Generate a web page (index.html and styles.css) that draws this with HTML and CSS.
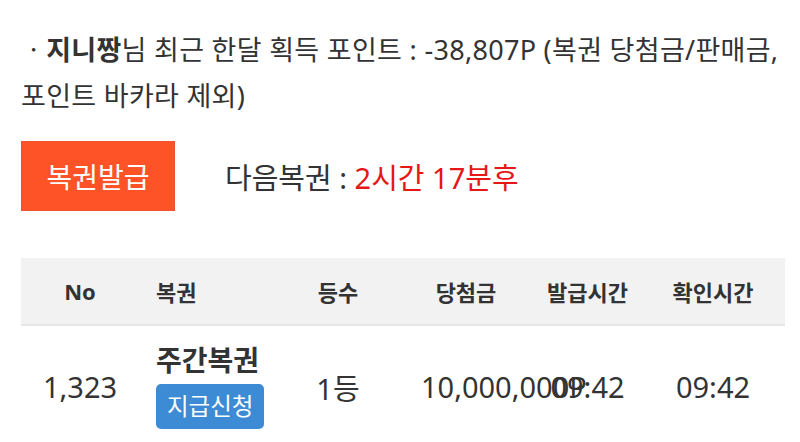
FILE: index.html
```html
<!DOCTYPE html>
<html lang="ko">
<head>
<meta charset="utf-8">
<link rel="stylesheet" href="styles.css">
</head>
<body>
<div class="wrap">
  <p class="info">ㆍ<b>지니짱</b>님 최근 한달 획득 포인트 : -38,807P (복권 당첨금/판매금, 포인트 바카라 제외)</p>
  <div class="issue">
    <button class="issue-btn">복권발급</button>
    <div class="next">다음복권 : <span class="red">2시간 17분후</span></div>
  </div>
  <table class="tbl">
    <colgroup>
      <col class="c1"><col class="c2"><col class="c3"><col class="c4"><col class="c5"><col class="c6">
    </colgroup>
    <thead>
      <tr>
        <th>No</th>
        <th class="left">복권</th>
        <th>등수</th>
        <th class="amt">당첨금</th>
        <th class="t1">발급시간</th>
        <th>확인시간</th>
      </tr>
    </thead>
    <tbody>
      <tr>
        <td>1,323</td>
        <td class="left">
          <div class="kind">주간복권</div>
          <span class="claim">지급신청</span>
        </td>
        <td>1등</td>
        <td class="amt">10,000,000P</td>
        <td class="t1">09:42</td>
        <td>09:42</td>
      </tr>
    </tbody>
  </table>
</div>
</body>
</html>
```

FILE: styles.css
```css
html, body {
  margin: 0;
  padding: 0;
  background: #ffffff;
}
body {
  font-family: "Noto Sans", "Noto Sans CJK KR", sans-serif;
  color: #333333;
  overflow: hidden;
}
.wrap {
  padding: 27px 10px 0 21px;
}
.info {
  margin: 0;
  font-size: 27px;
  line-height: 46px;
  letter-spacing: 0.3px;
  word-break: keep-all;
}
.info b {
  font-weight: 700;
}
.issue {
  margin-top: 22px;
  display: flex;
  align-items: center;
  gap: 50px;
}
.issue-btn {
  width: 154px;
  height: 70px;
  box-sizing: border-box;
  background: #fd5326;
  border: 1px solid #e9542e;
  color: #ffffff;
  font-family: inherit;
  font-size: 28px;
  padding: 0;
}
.next {
  font-size: 29px;
}
.red {
  color: #e51717;
}
.tbl {
  margin-top: 47px;
  width: 764px;
  border-collapse: collapse;
  table-layout: fixed;
}
.c1 { width: 118px; }
.c2 { width: 151px; }
.c3 { width: 96px; }
.c4 { width: 160px; }
.c5 { width: 95px; }
.c6 { width: 144px; }
.tbl th {
  background: #f2f2f2;
  height: 66px;
  padding: 0;
  font-size: 22px;
  font-weight: 700;
  color: #333333;
  text-align: center;
  border-bottom: 2px solid #e6e6e6;
}
.tbl td {
  padding: 18px 0;
  font-size: 29px;
  text-align: center;
  vertical-align: middle;
  white-space: nowrap;
  color: #333333;
}
.tbl .left {
  text-align: left;
  padding-left: 17px;
}
.tbl .amt {
  padding-left: 35px;
  padding-right: 35px;
}
.tbl .t1 {
  padding-right: 12px;
}
.kind {
  font-size: 28px;
  font-weight: 700;
  line-height: 32px;
}
.claim {
  display: inline-block;
  margin-top: 8px;
  background: #3d8bd4;
  color: #ffffff;
  font-size: 23.5px;
  line-height: 45px;
  padding: 0 11px;
  border-radius: 5px;
}
```
